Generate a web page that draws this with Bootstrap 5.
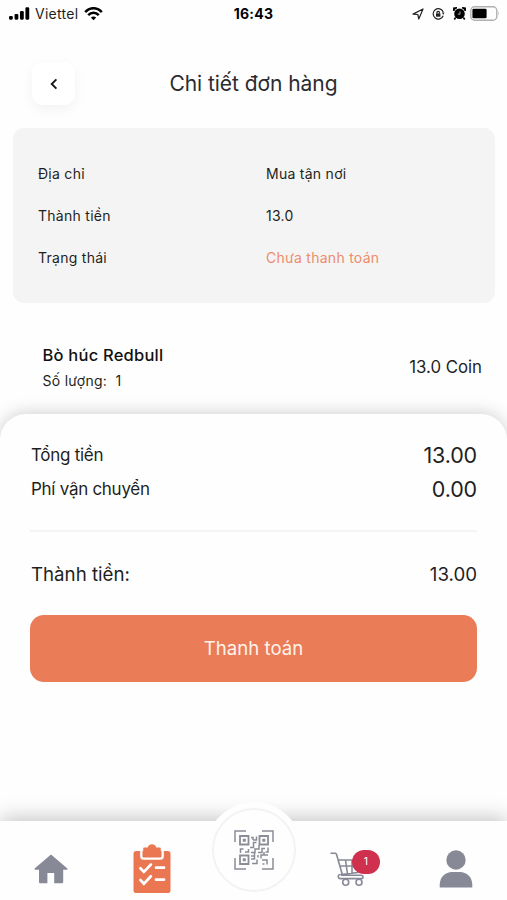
<!DOCTYPE html>
<html lang="vi">
<head>
<meta charset="utf-8">
<meta name="viewport" content="width=device-width, initial-scale=1">
<title>Chi tiết đơn hàng</title>
<link href="https://cdn.jsdelivr.net/npm/bootstrap@5.3.0/dist/css/bootstrap.min.css" rel="stylesheet">
<style>
body{font-family:Inter,"Noto Sans",sans-serif;color:#1f1f22;background:#fefefe}
svg{display:block}
.screen{height:900px}
.status{height:27px;padding:0 7px 0 9px;font-size:14px}
.status-side{width:200px}
.carrier{margin:0 6px 0 5px;letter-spacing:.28px}
.clock{font-size:14px;letter-spacing:.25px;padding-right:2px}
.top{height:101px;padding:12px 32px 0}
.back{width:43px;height:43px;border-radius:11px;background:#fff;box-shadow:0 4px 13px rgba(0,0,0,.05)}
.top-end{width:43px}
.page-title{font-size:21px;letter-spacing:-.05px;color:#2b2b31}
.info{margin:0 12px 0 13px;height:175px;border-radius:11px;background:#f4f4f4;padding:24px 25px;font-size:14px;letter-spacing:.27px}
.info-row{height:42px}
.info-key{width:228px}
.unpaid{color:#ed8c6c}
.item{height:111px;padding:38px 25px 0 42.500px}
.item-name{font-size:16.5px;font-weight:500;line-height:28px;color:#111;letter-spacing:.22px}
.item-qty{font-size:14px;line-height:24px;letter-spacing:.28px}
.item-price{font-size:16.8px;height:54px}
.sheet{height:407px;border-radius:26px 26px 0 0;background:#fefefe;padding:24px 30px 0;box-shadow:0 -1px 17px rgba(0,0,0,.19)}
.sum-row{height:34px;font-size:17px;padding-left:1px}
.sum-key{letter-spacing:-.28px;padding-top:2px}
.sum-val{font-size:21.5px;letter-spacing:-.15px}
.rule{height:2px;background:#f4f4f5;margin:24px 0 26px}
.total{height:34px;font-size:18.7px;padding-left:1px}
.pay{height:67px;margin-top:23px;border-radius:14px;background:#ea7c57;color:#fff3ec;font-size:18.6px;border:0}
.tabs{height:79px;background:#fefefe;box-shadow:0 -2px 20px rgba(0,0,0,.25)}
.tab-cell{width:101.4px;padding-top:17px}
.tab-cell.tab-scan{padding:0 0 0 1px}
.scan{width:96px;height:96px;margin-top:-19px;background:#fefefe}
.scan-ring{width:84px;height:84px;border:2px solid #f3f3f4}
.count{left:22px;top:-2px;width:28px;height:24px;background:#cf304d;color:#fff;font-size:10.5px}
</style>
</head>
<body>
<div class="screen d-flex flex-column overflow-hidden">
  <div class="status d-flex align-items-center justify-content-between flex-shrink-0">
    <div class="status-side d-flex align-items-center">
      <svg width="21" height="13" viewBox="0 0 22 13"><rect x="0" y="9" width="4" height="4" rx="1.2"/><rect x="5.8" y="7" width="4" height="6" rx="1.2"/><rect x="11.5" y="4" width="4" height="9" rx="1.2"/><rect x="17.2" y="0" width="4" height="13" rx="1.2"/></svg>
      <span class="carrier">Viettel</span>
      <svg width="19" height="14" viewBox="0 0 19 14" fill="none" stroke="#000" stroke-width="2.5"><path d="M1.2 5.1C6-.1 13-.1 17.8 5.1M4.2 8.2c3-3.2 7.6-3.2 10.6 0"/><path d="M6.8 10.5c1.6-1.5 3.8-1.5 5.4 0L9.5 13.2z" fill="#000" stroke="none"/></svg>
    </div>
    <div class="clock fw-bold text-black">16:43</div>
    <div class="status-side d-flex align-items-center justify-content-end">
      <svg class="me-2" width="12" height="12" viewBox="0 0 12 12" fill="none" stroke="#222" stroke-width="1.2" stroke-linejoin="round"><path d="M1 6.1 11 1 6.8 11 5.8 6.5z"/></svg>
      <svg width="13" height="12" viewBox="0 0 13 12" fill="none" stroke="#222" stroke-width="1.2"><path d="M11.2 7.7A5.2 5.2 0 1 1 11.2 4"/><path d="M9.9 4.6h2.6l-1.2 2.3z" fill="#222" stroke="none"/><rect x="4" y="5.4" width="4.4" height="3.3" fill="#222" stroke="none"/><path d="M4.900 5.500V4.700a1.300 1.300 0 0 1 2.600 0v.8"/></svg>
      <svg class="mx-1 ps-1" width="17" height="13" viewBox="0 0 13 13"><circle cx="6.500" cy="6.800" r="5.300"/><path d="M.8 4V1.200L4 .8M12.200 4V1.200L9 .8M2.600 10.500 1.300 12.500M10.400 10.500l1.300 2" stroke="#000" stroke-width="1.500"/><path d="M7 4.500v2.700H4.800" fill="none" stroke="#bbb" stroke-width=".9"/></svg>
      <svg width="30" height="15" viewBox="0 0 30 15"><rect x=".8" y=".8" width="26" height="13.400" rx="3.800" fill="none" stroke="#b0b0b0" stroke-width="1.400"/><rect x="2.400" y="2.800" width="14.200" height="9.400" rx="1.200"/><path d="M28 5.300q1.600 2 0 4.400z" fill="#a9a9a9"/></svg>
    </div>
  </div>

  <header class="top d-flex align-items-center justify-content-between flex-shrink-0">
    <div class="back d-flex align-items-center justify-content-center"><svg width="8" height="12" viewBox="0 0 8 12" fill="none" stroke="#18181c" stroke-width="1.900"><path d="M6.400 1.300 1.700 6l4.700 4.700"/></svg></div>
    <div class="page-title">Chi tiết đơn hàng</div>
    <div class="top-end"></div>
  </header>

  <section class="info flex-shrink-0">
    <div class="info-row d-flex align-items-center"><span class="info-key">Địa chỉ</span><span>Mua tận nơi</span></div>
    <div class="info-row d-flex align-items-center"><span class="info-key">Thành tiền</span><span>13.0</span></div>
    <div class="info-row d-flex align-items-center"><span class="info-key">Trạng thái</span><span class="unpaid">Chưa thanh toán</span></div>
  </section>

  <section class="item d-flex justify-content-between flex-shrink-0">
    <div><div class="item-name">Bò húc Redbull</div><div class="item-qty">Số lượng:&nbsp; 1</div></div>
    <div class="item-price d-flex align-items-center">13.0 Coin</div>
  </section>

  <section class="sheet flex-shrink-0">
    <div class="sum-row d-flex align-items-center justify-content-between"><span class="sum-key">Tổng tiền</span><span class="sum-val">13.00</span></div>
    <div class="sum-row d-flex align-items-center justify-content-between"><span class="sum-key">Phí vận chuyển</span><span class="sum-val">0.00</span></div>
    <div class="rule"></div>
    <div class="total d-flex align-items-center justify-content-between"><span>Thành tiền:</span><span>13.00</span></div>
    <button class="pay w-100" type="button">Thanh toán</button>
  </section>

  <nav class="tabs d-flex flex-shrink-0 position-relative">
    <div class="tab-cell d-flex justify-content-center align-items-center">
      <svg width="34" height="30" viewBox="0 0 34 30" fill="#878997"><path d="M17 .5.6 14.400q-.5 1.200.8 1.300H5V28q0 1.200 1.200 1.200h7.200V19h6.800v10.200H28q1.200 0 1.200-1.200V15.700h3.500q1.300-.1.700-1.300z"/></svg>
    </div>
    <div class="tab-cell d-flex justify-content-center align-items-center">
      <svg width="38" height="50" viewBox="0 0 38 50"><rect x=".5" y="7" width="37" height="42" rx="2.800" fill="#ea7652"/><path d="M8.300 6v6.200q0 2.400 2.400 2.400h16.600q2.400 0 2.400-2.400V6" fill="none" stroke="#fff" stroke-width="2.300"/><path d="M10.200 4.500q0-1 1-1h3.500C16.200-.7 21.800-.7 23.300 3.500h3.500q1 0 1 1v6.800q0 1-1 1H11.200q-1 0-1-1z" fill="#ea7652"/><path d="m7.400 24.200 3.500 3.700 7-7.400M7.400 36l3.500 3.700 7-7.400M23 23.700h8M23 35.700h8" fill="none" stroke="#fff" stroke-width="2.700" stroke-linecap="round"/></svg>
    </div>
    <div class="tab-cell tab-scan d-flex justify-content-center">
      <div class="scan rounded-circle d-flex align-items-center justify-content-center flex-shrink-0">
        <div class="scan-ring rounded-circle d-flex align-items-center justify-content-center">
          <svg width="40" height="40" viewBox="0 0 40 40" fill="none" stroke="#8b8d96" stroke-width="1.500"><path d="M1 12V1h11M28 1h11v11M39 28v11H28M12 39H1V28"/><path d="M6 6h8.500v8.500H6zM25.500 6H34v8.500h-8.500zM6 25.500h8.500V34H6z" stroke-width="1.800"/><path d="M8.800 8.800h3v3h-3zM28.300 8.800h3v3h-3zM8.800 28.300h3v3h-3z" fill="#8b8d96" stroke="none"/><path d="M17 7.500h2v2.500M22.500 6.500v3.500h-3.500M22.500 12.500h-3v5h-3.500M6.500 23v-4h3M11 22h3.500v-3M17 22.500h4v-3.500h4v-4M24 22.500h4v-4h3M34 17.500v4.500h-2.500M17 26h3.500v-3M20.500 26v3h-3.500M18 33.500h5v-4M24 25v2.500M27 28.500v-3.500h3M30 22v3h4M28 30h5v4.500M28.500 34h2"/></svg>
        </div>
      </div>
    </div>
    <div class="tab-cell d-flex justify-content-center align-items-center">
      <div class="position-relative">
        <svg width="50" height="35" viewBox="0 0 50 35" fill="none" stroke="#878997" stroke-width="1.600"><path d="M.5 1.200h4.700q1 0 1.300 1L12.300 22.500M8.200 8H31l-3.300 12.500-17 2M9.500 14h20M15.500 8l2 14M22 8v13.500M10.500 22.500q-2.500.3-2.200 2.300.2 1.800 2.200 1.800H31q2 0 2-1.700t-2-1.700H11"/><circle cx="15.700" cy="30.300" r="3"/><circle cx="29" cy="30.300" r="3"/></svg>
        <span class="count position-absolute rounded-pill d-flex align-items-center justify-content-center">1</span>
      </div>
    </div>
    <div class="tab-cell d-flex justify-content-center align-items-center">
      <svg width="34" height="38" viewBox="0 0 34 38" fill="#878997"><circle cx="17" cy="10" r="9.700"/><path d="M.7 37.500V35C.7 27 6.500 22 13 22h8c6.500 0 12.300 5 12.300 13v2.500z"/></svg>
    </div>
  </nav>
</div>
<script src="https://cdn.jsdelivr.net/npm/bootstrap@5.3.0/dist/js/bootstrap.bundle.min.js"></script>
</body>
</html>
